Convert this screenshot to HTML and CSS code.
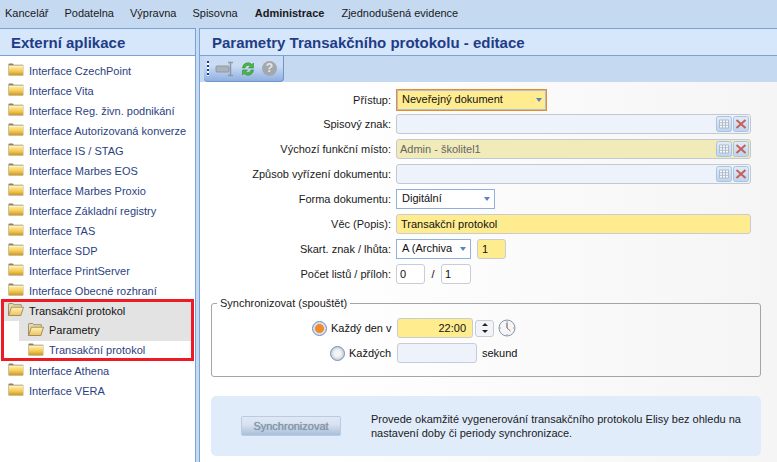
FILE: index.html
```html
<!DOCTYPE html>
<html lang="cs">
<head>
<meta charset="utf-8">
<title>Parametry Transakčního protokolu</title>
<link rel="stylesheet" href="styles.css">
</head>
<body>
<svg class="defs" width="0" height="0" aria-hidden="true">
  <defs>
    <linearGradient id="fg" x1="0" y1="0" x2="0" y2="1"><stop offset="0" stop-color="#fff0a8"/><stop offset=".55" stop-color="#f5cb55"/><stop offset="1" stop-color="#d09a22"/></linearGradient>
    <linearGradient id="og" x1="0" y1="0" x2="0" y2="1"><stop offset="0" stop-color="#fff2b8"/><stop offset="1" stop-color="#f0c25c"/></linearGradient>
    <linearGradient id="bg" x1="0" y1="0" x2="0" y2="1"><stop offset="0" stop-color="#e2ecf8"/><stop offset="1" stop-color="#bfd3ec"/></linearGradient>
    <symbol id="folder" viewBox="0 0 16 13">
      <path d="M.5 2.500V1.200C.5.800.8.500 1.200.500h3.600l1 1.200h9.500v10.800H.5z" fill="#8f8258"/>
      <path d="M1 3h14v9H1z" fill="url(#fg)"/>
      <path d="M1 3h14" stroke="#fff8d8"/>
    </symbol>
    <symbol id="open" viewBox="0 0 16 13">
      <path d="M.5 12.500V1.200C.5.800.8.500 1.200.500h3.600l1 1.200h7.500v2" fill="#e8d9a8" stroke="#8f7d52" stroke-width=".8"/>
      <path d="M.6 12.500 3.400 4.200h12.100l-2.600 8.300z" fill="url(#og)" stroke="#8f7d52" stroke-width=".8"/>
    </symbol>
    <symbol id="grid" viewBox="0 0 16 16">
      <rect x=".5" y=".5" width="15" height="15" rx="2" fill="url(#bg)" stroke="#a9c3e0"/>
      <path d="M3.500 4h9v8h-9zM3.500 6.700h9M3.500 9.300h9M6.500 4v8M9.500 4v8" fill="#f4f7fb" stroke="#a5b3c4" stroke-width=".8"/>
    </symbol>
    <symbol id="del" viewBox="0 0 16 16">
      <rect x=".5" y=".5" width="15" height="15" rx="2" fill="url(#bg)" stroke="#a9c3e0"/>
      <path d="M3.500 4 12.500 12M12.500 4 3.500 12" stroke="#c4605a" stroke-width="2"/>
    </symbol>
  </defs>
</svg>

<nav class="menu">
  <span class="menu-item">Kancelář</span>
  <span class="menu-item">Podatelna</span>
  <span class="menu-item">Výpravna</span>
  <span class="menu-item">Spisovna</span>
  <span class="menu-item active">Administrace</span>
  <span class="menu-item">Zjednodušená evidence</span>
</nav>

<div class="layout">
  <aside class="side">
    <h2 class="side-title">Externí aplikace</h2>
    <ul class="tree">
      <li class="node"><svg class="ficon"><use href="#folder"/></svg>Interface CzechPoint</li>
      <li class="node"><svg class="ficon"><use href="#folder"/></svg>Interface Vita</li>
      <li class="node"><svg class="ficon"><use href="#folder"/></svg>Interface Reg. živn. podnikání</li>
      <li class="node"><svg class="ficon"><use href="#folder"/></svg>Interface Autorizovaná konverze</li>
      <li class="node"><svg class="ficon"><use href="#folder"/></svg>Interface IS / STAG</li>
      <li class="node"><svg class="ficon"><use href="#folder"/></svg>Interface Marbes EOS</li>
      <li class="node"><svg class="ficon"><use href="#folder"/></svg>Interface Marbes Proxio</li>
      <li class="node"><svg class="ficon"><use href="#folder"/></svg>Interface Základní registry</li>
      <li class="node"><svg class="ficon"><use href="#folder"/></svg>Interface TAS</li>
      <li class="node"><svg class="ficon"><use href="#folder"/></svg>Interface SDP</li>
      <li class="node"><svg class="ficon"><use href="#folder"/></svg>Interface PrintServer</li>
      <li class="node"><svg class="ficon"><use href="#folder"/></svg>Interface Obecné rozhraní</li>
      <li class="node current"><svg class="ficon"><use href="#open"/></svg>Transakční protokol</li>
      <li class="node child current"><svg class="ficon"><use href="#open"/></svg>Parametry</li>
      <li class="node child"><svg class="ficon"><use href="#folder"/></svg>Transakční protokol</li>
      <li class="node"><svg class="ficon"><use href="#folder"/></svg>Interface Athena</li>
      <li class="node"><svg class="ficon"><use href="#folder"/></svg>Interface VERA</li>
    </ul>
  </aside>

  <main class="panel">
    <h1 class="panel-title">Parametry Transakčního protokolu - editace</h1>
    <div class="toolbar-strip">
      <div class="toolbar">
        <span class="grip"></span>
        <svg class="tool" width="20" height="16" viewBox="0 0 20 16"><rect x="1" y="5" width="13" height="6" rx="1" fill="#aab2bc" stroke="#8f98a3"/><path d="M13 1.500h5M13 14.500h5M15.500 1.500v13" stroke="#8f98a3" stroke-width="1.500" fill="none"/></svg>
        <svg class="tool" width="16" height="16" viewBox="0 0 16 16"><path d="M2.500 7A5.500 5.500 0 0 1 12 3.500L13.500 2v5h-5l1.700-1.700A3 3 0 0 0 5 7z" fill="#4fb548" stroke="#2f8f33" stroke-width=".6"/><path d="M13.500 9A5.500 5.500 0 0 1 4 12.500L2.500 14V9h5l-1.700 1.700A3 3 0 0 0 11 9z" fill="#4fb548" stroke="#2f8f33" stroke-width=".6"/></svg>
        <span class="help">?</span>
      </div>
    </div>

    <form class="form">
      <div class="row first">
        <label class="lbl">Přístup:</label>
        <div class="select focus w-151"><span class="sel-text">Neveřejný dokument</span><i class="caret"></i></div>
      </div>
      <div class="row">
        <label class="lbl">Spisový znak:</label>
        <div class="picker"><span class="pick-val"></span><svg class="pbtn"><use href="#grid"/></svg><svg class="pbtn"><use href="#del"/></svg></div>
      </div>
      <div class="row">
        <label class="lbl">Výchozí funkční místo:</label>
        <div class="picker filled"><span class="pick-val">Admin - školitel1</span><svg class="pbtn"><use href="#grid"/></svg><svg class="pbtn"><use href="#del"/></svg></div>
      </div>
      <div class="row">
        <label class="lbl">Způsob vyřízení dokumentu:</label>
        <div class="picker"><span class="pick-val"></span><svg class="pbtn"><use href="#grid"/></svg><svg class="pbtn"><use href="#del"/></svg></div>
      </div>
      <div class="row">
        <label class="lbl">Forma dokumentu:</label>
        <div class="select w-99"><span class="sel-text">Digitální</span><i class="caret"></i></div>
      </div>
      <div class="row">
        <label class="lbl">Věc (Popis):</label>
        <div class="box req w-355">Transakční protokol</div>
      </div>
      <div class="row">
        <label class="lbl">Skart. znak / lhůta:</label>
        <div class="select w-75"><span class="sel-text">A (Archiva</span><i class="caret"></i></div>
        <div class="box req w-29 ml-6">1</div>
      </div>
      <div class="row">
        <label class="lbl">Počet listů / příloh:</label>
        <div class="box plain w-29">0</div>
        <span class="slash">/</span>
        <div class="box plain w-30">1</div>
      </div>

      <fieldset class="sync">
        <legend class="legend">Synchronizovat (spouštět)</legend>
        <div class="sync-row">
          <span class="radio on"></span>
          <span class="sync-lbl">Každý den v</span>
          <div class="box req time">22:00</div>
          <div class="spin"><span class="spin-up"></span><span class="spin-down"></span></div>
          <svg class="clock" width="18" height="18" viewBox="0 0 18 18"><circle cx="9" cy="9" r="8" fill="#f3f5f8" stroke="#8c949e"/><path d="M9 1.500v1.500M9 15v1.500M1.500 9H3M15 9h1.500" stroke="#9aa2ac"/><path d="M9 3.500V9" stroke="#555"/><path d="M9 9l3.500 3" stroke="#c8643c"/></svg>
        </div>
        <div class="sync-row second">
          <span class="radio"></span>
          <span class="sync-lbl">Každých</span>
          <div class="box empty w-80"></div>
          <span class="unit">sekund</span>
        </div>
      </fieldset>

      <section class="info">
        <button type="button" class="sync-btn">Synchronizovat</button>
        <p class="info-text">Provede okamžité vygenerování transakčního protokolu Elisy bez ohledu na nastavení doby či periody synchronizace.</p>
      </section>
    </form>
  </main>
</div>
<div class="annot"></div>
</body>
</html>
```

FILE: styles.css
```css
* { box-sizing: border-box; }
html, body { height: 100%; }
body {
  margin: 0;
  width: 777px;
  height: 462px;
  overflow: hidden;
  position: relative;
  background: #c5d9f1;
  font: 11px/14px "Liberation Sans", Arial, sans-serif;
  color: #111;
}
.defs { position: absolute; }

.menu {
  height: 28px;
  display: flex;
  align-items: center;
  padding: 0 0 2px 5px;
  gap: 16px;
  background: #c5d9f1;
  color: #1a1a1a;
}
.menu-item.active { font-weight: bold; margin-left: 1px; margin-right: 1px; }

.layout { display: flex; height: 434px; gap: 3px; }

.side {
  width: 196px;
  background: #fff;
  border-top: 1px solid #7ba2d6;
  border-right: 1px solid #7ba2d6;
  flex: none;
}
.side-title, .panel-title {
  margin: 0;
  height: 27px;
  padding-top: 1px;
  background: #d6e6fb;
  border-bottom: 1px solid #7ba2d6;
  color: #1f3d87;
  font-size: 15px;
  line-height: 25px;
  font-weight: bold;
}
.side-title { padding-left: 11px; }
.tree { list-style: none; margin: 0; padding: 5px 0 0 2px; }
.node {
  height: 20px;
  width: 191px;
  display: flex;
  align-items: center;
  padding-left: 6px;
  color: #2b3f7f;
}
.ficon { width: 16px; height: 13px; margin-right: 5px; margin-top: -3px; flex: none; }
.node.child { margin-left: 17px; width: 174px; padding-left: 9px; padding-bottom: 3px; }
.node.child .ficon { margin-top: 0; }
.node.current { background: #e3e3e3; color: #111; }

.panel {
  flex: 1;
  border-top: 1px solid #7ba2d6;
  border-left: 1px solid #7ba2d6;
  background: #fff;
  min-width: 0;
}
.panel-title { padding-left: 12px; }
.toolbar-strip { height: 26px; background: #c5d9f1; padding-left: 4px; }
.toolbar {
  width: 80px;
  height: 26px;
  display: flex;
  align-items: center;
  gap: 6px;
  padding: 0 0 0 3px;
  background: linear-gradient(#c9dcf4, #c9dcf4 40%, #8fb0e0);
  border-right: 1px solid #6f93cc;
  border-bottom: 1px solid #6f93cc;
  border-radius: 0 0 4px 4px;
}
.grip {
  width: 2px;
  height: 15px;
  background: repeating-linear-gradient(#1f3d87 0 2px, #fff 2px 4px);
}
.tool { flex: none; margin-right: -1px; }
.help {
  width: 15px;
  height: 15px;
  margin-left: 1px;
  border-radius: 50%;
  background: #a3a8ae;
  color: #e6e8ea;
  font-weight: bold;
  font-size: 12px;
  line-height: 15px;
  text-align: center;
}

.form {
  height: 380px;
  padding: 6px 16px 0 11px;
  background: linear-gradient(90deg, #fff 0, #fff 20%, #f5f5f5 100%);
}
.row { display: flex; align-items: center; height: 20px; margin-top: 5px; margin-left: -11px; }
.row.first { height: 23px; margin-top: 0; }
.row.first + .row { margin-top: 3px; }
.lbl { width: 191px; margin-right: 5px; text-align: right; flex: none; color: #1a1a1a; }

.select {
  height: 20px;
  display: flex;
  align-items: center;
  justify-content: space-between;
  padding: 0 4px 2px 5px;
  background: #fff;
  border: 1px solid #8fb1dc;
}
.select.focus {
  height: 22px;
  background: #ffec8f;
  border: 1px solid #f08a24;
  box-shadow: inset 0 0 0 1px #a9c1dc;
}
.sel-text { white-space: nowrap; flex: 1; }
.caret { width: 0; height: 0; border: 3px solid transparent; border-top: 4px solid #5b82bd; border-bottom: 0; flex: none; margin: 2px 0 0 3px; }
.w-151 { width: 151px; }
.w-99 { width: 99px; }
.w-75 { width: 75px; }
.w-355 { width: 355px; }
.w-29 { width: 29px; }
.w-30 { width: 30px; }
.w-80 { width: 80px; }
.ml-6 { margin-left: 6px; }

.picker {
  width: 355px;
  height: 20px;
  display: flex;
  align-items: center;
  gap: 1px;
  padding-right: 1px;
  background: #eef3fb;
  border: 1px solid #c3c9d1;
  border-radius: 3px;
}
.picker.filled { background: #f0ebb8; color: #666; }
.pick-val { flex: 1; padding-left: 3px; }
.pbtn { width: 16px; height: 16px; flex: none; }

.box {
  height: 20px;
  line-height: 18px;
  padding: 0 3px;
  border: 1px solid #c9ccd2;
  border-radius: 3px;
  background: #fff;
}
.box.req { background: #ffec8f; padding-left: 4px; }
.box.empty { background: #eef3fb; }
.slash { width: 16px; text-align: center; }

.sync {
  margin: 12px 0 0;
  padding: 8px 0 0;
  height: 81px;
  border: 1px solid #a5a5a5;
  border-radius: 3px;
  width: 550px;
}
.legend { padding: 0 3px; margin-left: 5px; color: #1a1a1a; }
.sync-row { display: flex; align-items: center; height: 20px; padding-left: 100px; }
.sync-row.second { margin-top: 5px; padding-left: 118px; }
.radio {
  width: 15px;
  height: 15px;
  border-radius: 50%;
  flex: none;
  border: 1px solid #6f8fc0;
  background: radial-gradient(circle, #f4f4f4 0 3px, #cfd4db 6px);
}
.radio.on { background: radial-gradient(circle, #f28a2a 0 4px, #d9dfe8 5px); }
.sync-lbl { margin-left: 4px; width: 66px; flex: none; }
.sync-row.second .sync-lbl { width: 48px; }
.time { width: 76px; text-align: right; padding-right: 6px; }
.spin {
  width: 19px;
  height: 17px;
  margin-left: 2px;
  border: 1px solid #c9ccd2;
  border-radius: 3px;
  display: flex;
  flex-direction: column;
  align-items: center;
  justify-content: space-around;
  background: #f1f4f8;
}
.spin-up { width: 0; height: 0; border: 3px solid transparent; border-bottom: 3px solid #222; border-top: 0; }
.spin-down { width: 0; height: 0; border: 3px solid transparent; border-top: 3px solid #222; border-bottom: 0; }
.clock { margin-left: 4px; flex: none; }
.unit { margin-left: 5px; }

.info {
  margin-top: 19px;
  width: 550px;
  height: 60px;
  display: flex;
  align-items: center;
  padding-left: 30px;
  background: #e1ecfb;
  border-radius: 5px;
}
.sync-btn {
  width: 100px;
  height: 20px;
  padding: 0;
  flex: none;
  font: 11px/14px "Liberation Sans", Arial, sans-serif;
  color: #8494a8;
  text-shadow: 0 0 1px #8494a8;
  border: 1px solid #b9cbe2;
  border-radius: 2px;
  background: linear-gradient(#dfe8f4, #d9e3f0 40%, #a9bfdb);
}
.info-text { margin: 0 0 0 30px; width: 380px; color: #1a1a1a; }

.annot {
  position: absolute;
  left: 1px;
  top: 299px;
  width: 193px;
  height: 62px;
  border: 3px solid #ed1c24;
}
```
